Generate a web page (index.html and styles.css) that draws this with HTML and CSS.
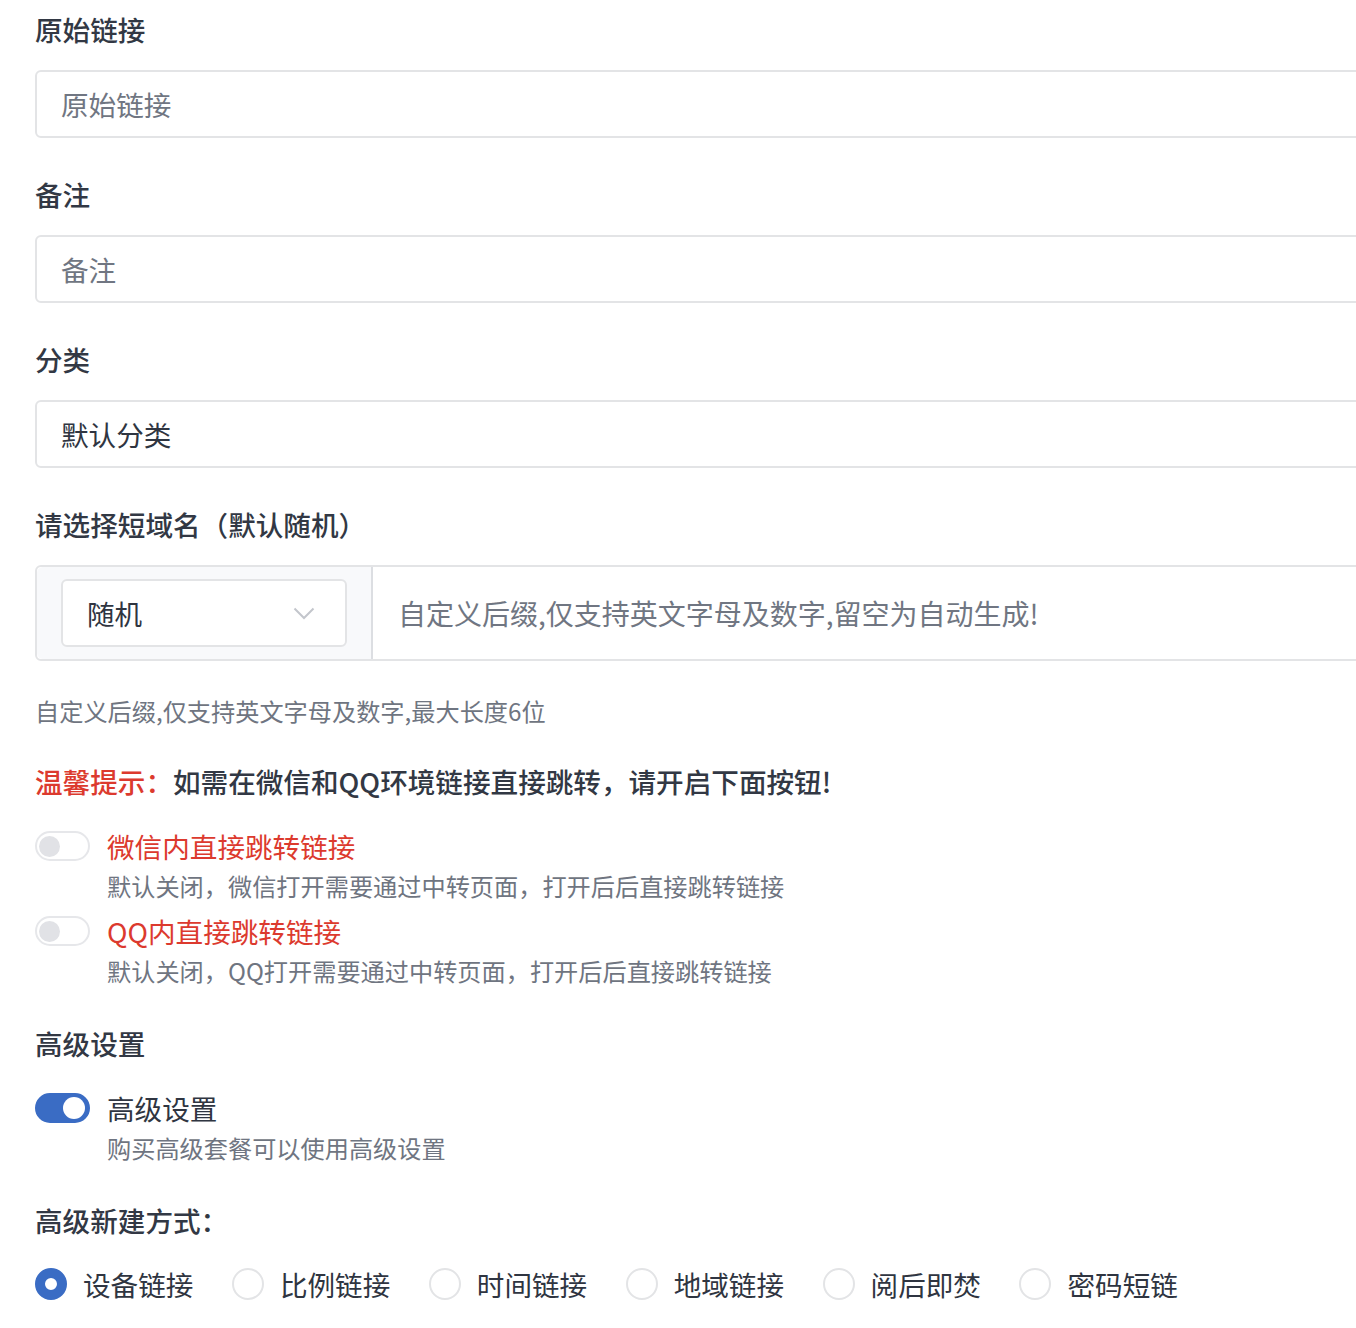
FILE: index.html
```html
<!DOCTYPE html>
<html lang="zh-CN">
<head>
<meta charset="utf-8">
<title>新建短链</title>
<link rel="stylesheet" href="styles.css">
</head>
<body>
<form class="form">
  <div class="field">
    <div class="label">原始链接</div>
    <div class="input"><span class="placeholder">原始链接</span></div>
  </div>
  <div class="field">
    <div class="label">备注</div>
    <div class="input"><span class="placeholder">备注</span></div>
  </div>
  <div class="field">
    <div class="label">分类</div>
    <div class="input"><span class="value">默认分类</span></div>
  </div>
  <div class="field field-tight">
    <div class="label">请选择短域名（默认随机）</div>
    <div class="group">
      <div class="group-addon">
        <div class="select">
          <span class="value">随机</span>
          <svg class="chevron" width="22" height="13" viewBox="0 0 22 13"><path d="M1.5 1.5 L11 11 L20.5 1.5" fill="none" stroke="#c3c6cc" stroke-width="2"/></svg>
        </div>
      </div>
      <div class="group-input"><span class="placeholder">自定义后缀,仅支持英文字母及数字,留空为自动生成!</span></div>
    </div>
    <div class="help">自定义后缀,仅支持英文字母及数字,最大长度6位</div>
  </div>

  <div class="tip"><span class="tip-red">温馨提示：</span>如需在微信和QQ环境链接直接跳转，请开启下面按钮!</div>

  <div class="switch-row">
    <span class="switch"><span class="knob"></span></span>
    <div class="switch-text">
      <div class="switch-label red">微信内直接跳转链接</div>
      <div class="switch-desc">默认关闭，微信打开需要通过中转页面，打开后后直接跳转链接</div>
    </div>
  </div>
  <div class="switch-row second">
    <span class="switch"><span class="knob"></span></span>
    <div class="switch-text">
      <div class="switch-label red">QQ内直接跳转链接</div>
      <div class="switch-desc">默认关闭，QQ打开需要通过中转页面，打开后后直接跳转链接</div>
    </div>
  </div>

  <div class="label section">高级设置</div>
  <div class="switch-row">
    <span class="switch on"><span class="knob"></span></span>
    <div class="switch-text">
      <div class="switch-label">高级设置</div>
      <div class="switch-desc">购买高级套餐可以使用高级设置</div>
    </div>
  </div>

  <div class="label section">高级新建方式：</div>
  <div class="radios">
    <label class="radio"><span class="dot checked"></span>设备链接</label>
    <label class="radio"><span class="dot"></span>比例链接</label>
    <label class="radio"><span class="dot"></span>时间链接</label>
    <label class="radio"><span class="dot"></span>地域链接</label>
    <label class="radio"><span class="dot"></span>阅后即焚</label>
    <label class="radio"><span class="dot"></span>密码短链</label>
  </div>
</form>
</body>
</html>
```

FILE: styles.css
```css
html, body {
  margin: 0;
  padding: 0;
  background: #ffffff;
  overflow: hidden;
}
body {
  font-family: "Noto Sans CJK SC", "Noto Sans", sans-serif;
  color: #2f3541;
}
.form {
  width: 1420px;
  padding: 9px 0 0 35px;
}
.field {
  margin-bottom: 36px;
}
.field-tight {
  margin-bottom: 0;
}
.label {
  font-size: 27.6px;
  line-height: 40px;
  font-weight: 500;
  color: #323844;
  margin-bottom: 21px;
}
.input {
  height: 64px;
  border: 2px solid #e3e4e6;
  border-radius: 6px;
  display: flex;
  align-items: center;
  padding: 0 24px;
  font-size: 27.6px;
}
.placeholder {
  color: #707682;
}
.value {
  color: #2f3541;
}
.group {
  display: flex;
  height: 92px;
  border: 2px solid #e3e4e6;
  border-radius: 6px 0 0 6px;
  font-size: 27.6px;
}
.group-addon {
  background: #f8f9fb;
  padding: 12px 24px;
  border-right: 2px solid #dcdee2;
  border-radius: 6px 0 0 6px;
}
.select {
  height: 64px;
  background: #ffffff;
  border: 2px solid #e3e4e6;
  border-radius: 6px;
  display: flex;
  align-items: center;
  justify-content: space-between;
  padding: 0 30px 0 24px;
  width: 228px;
}
.chevron {
  display: block;
}
.group-input {
  flex: 1;
  display: flex;
  align-items: center;
  padding-left: 25px;
  font-size: 28px;
}
.help {
  margin-top: 32px;
  font-size: 24.2px;
  line-height: 36px;
  color: #6f7581;
}
.tip {
  margin-top: 32px;
  font-size: 27.6px;
  line-height: 40px;
  font-weight: 500;
  color: #323844;
}
.tip-red {
  color: #dc3a2e;
}
.switch-row {
  display: flex;
  align-items: flex-start;
  gap: 17px;
  margin-top: 25px;
}
.switch-row.second {
  margin-top: 5px;
}
.switch {
  flex: none;
  box-sizing: border-box;
  margin-top: 5px;
  width: 55px;
  height: 30px;
  border: 2px solid #e6e7ea;
  border-radius: 16px;
  background: #ffffff;
  display: flex;
  align-items: center;
  padding: 0 2px;
}
.switch .knob {
  width: 21px;
  height: 21px;
  border-radius: 50%;
  background: #e1e2e6;
}
.switch.on {
  background: #3a6cc4;
  border-color: #3a6cc4;
  justify-content: flex-end;
}
.switch.on .knob {
  width: 22px;
  height: 22px;
  background: #ffffff;
  margin-right: 1px;
}
.switch-label {
  font-size: 27.6px;
  line-height: 40px;
  color: #2f3541;
}
.switch-label.red {
  color: #dc3a2e;
}
.switch-desc {
  font-size: 24.2px;
  line-height: 40px;
  color: #6f7581;
}
.label.section {
  margin: 32px 0 0;
}
.radios {
  display: flex;
  margin-top: 24px;
  gap: 38.5px;
}
.radio {
  display: flex;
  align-items: center;
  gap: 16px;
  font-size: 27.6px;
  line-height: 40px;
  color: #2f3541;
}
.dot {
  width: 28px;
  height: 28px;
  border: 2px solid #e3e4e6;
  border-radius: 50%;
  background: #ffffff;
  flex: none;
}
.dot.checked {
  width: 12px;
  height: 12px;
  border: 10px solid #3a6cc4;
}
```
